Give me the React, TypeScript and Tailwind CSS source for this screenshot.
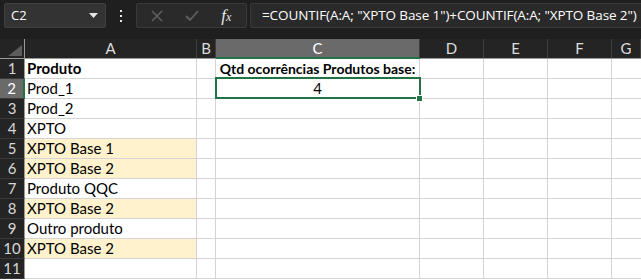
// Excel-like sheet, dark ribbon chrome with COUNTIF formula

const COLS = [
  { key: "A", w: "w-[172px]" },
  { key: "B", w: "w-[19px]" },
  { key: "C", w: "w-[204px]" },
  { key: "D", w: "w-[64px]" },
  { key: "E", w: "w-[64px]" },
  { key: "F", w: "w-[64px]" },
  { key: "G", w: "flex-1" },
];

const ROWS: { a: string; bold?: boolean; fill?: boolean }[] = [
  { a: "Produto", bold: true },
  { a: "Prod_1" },
  { a: "Prod_2" },
  { a: "XPTO" },
  { a: "XPTO Base 1", fill: true },
  { a: "XPTO Base 2", fill: true },
  { a: "Produto QQC" },
  { a: "XPTO Base 2", fill: true },
  { a: "Outro produto" },
  { a: "XPTO Base 2", fill: true },
  { a: "" },
];

const cellFont = "[font-family:Lato,'Open_Sans',sans-serif] text-[15px]";

export default function App() {
  return (
    <div className="w-[641px] h-[279px] overflow-hidden bg-[#1f1f1f] [font-family:'Open_Sans',sans-serif]">
      <FormulaBar />
      <Sheet />
    </div>
  );
}

function FormulaBar() {
  return (
    <div className="flex h-[39px] items-start gap-0 pt-[3px] pl-[4px]">
      <div className="flex h-[25px] w-[102px] items-center justify-between rounded-[2px] border border-[#404040] bg-[#333333] pl-[6px] pr-[7px]">
        <span className="text-[13px] text-white">C2</span>
        <svg width="9" height="5" viewBox="0 0 9 5">
          <path d="M0 0h9L4.5 5z" fill="#e6e6e6" />
        </svg>
      </div>
      <div className="flex h-[25px] w-[30px] flex-col items-center justify-center gap-[3px]">
        <span className="h-[2px] w-[2px] bg-[#e6e6e6]" />
        <span className="h-[2px] w-[2px] bg-[#e6e6e6]" />
        <span className="h-[2px] w-[2px] bg-[#e6e6e6]" />
      </div>
      <div className="flex h-[25px] w-[111px] items-center rounded-[2px] border border-[#3a3a3a] bg-[#2a2a2a]">
        <div className="flex w-[40px] justify-center">
          <svg width="12" height="12" viewBox="0 0 12 12">
            <path d="M1 1l10 10M11 1L1 11" stroke="#5f5f5f" strokeWidth="1.6" />
          </svg>
        </div>
        <div className="flex w-[30px] justify-center">
          <svg width="14" height="11" viewBox="0 0 14 11">
            <path d="M1 6l4 4 8-9" stroke="#5f5f5f" strokeWidth="1.8" fill="none" />
          </svg>
        </div>
        <div className="flex w-[40px] justify-center">
          <span className="italic text-[17px] leading-none text-[#e8e8e8] [font-family:'Liberation_Serif',serif]">
            f<span className="text-[12px]">x</span>
          </span>
        </div>
      </div>
      <div className="ml-[3px] flex h-[25px] flex-1 items-center rounded-l-[2px] border border-r-0 border-[#3a3a3a] bg-[#2a2a2a] pl-[11px]">
        <span className="whitespace-nowrap text-[13.5px] text-white tracking-[-0.1px]">
          =COUNTIF(A:A; "XPTO Base 1")+COUNTIF(A:A; "XPTO Base 2")
        </span>
      </div>
    </div>
  );
}

function Sheet() {
  return (
    <div className="relative">
      {/* column headers */}
      <div className="flex h-[20px] bg-[#242424] border-b border-[#9a9a9a]">
        <div className="relative w-[25px] border-r border-[#9a9a9a]">
          <svg className="absolute left-[8px] top-[6px]" width="14" height="11" viewBox="0 0 14 11">
            <path d="M14 0v11H0z" fill="#5c5c5c" />
          </svg>
        </div>
        {COLS.map((c) => (
          <div
            key={c.key}
            className={`${c.w} flex shrink-0 items-center justify-center border-r border-[#3e3e3e] text-[14px] ${
              c.key === "C" ? "bg-[#6a6a6a] text-white border-b-2 border-b-[#217346] -mb-[1px]" : "text-[#dcdcdc]"
            } ${cellFont}`}
          >
            {c.key}
          </div>
        ))}
      </div>

      {ROWS.map((r, i) => (
        <div key={i} className="flex h-[20px]">
          <div
            className={`flex w-[25px] shrink-0 items-center justify-center border-b border-[#3a3a3a] text-[14px] ${cellFont} ${
              i === 1
                ? "bg-[#6a6a6a] text-white border-r-2 border-r-[#217346]"
                : "bg-[#242424] text-[#d8d8d8] border-r border-r-[#9a9a9a]"
            }`}
          >
            {i + 1}
          </div>
          <div
            className={`w-[172px] shrink-0 border-r border-b border-[#d4d4d4] pl-[2px] leading-[19px] text-black ${cellFont} ${
              r.fill ? "bg-[#fff2cc]" : "bg-white"
            } ${r.bold ? "font-bold" : ""}`}
          >
            {r.a}
          </div>
          <div className="w-[19px] shrink-0 border-r border-b border-[#d4d4d4] bg-white" />
          <div
            className={`w-[204px] shrink-0 whitespace-nowrap border-r border-b border-[#d4d4d4] bg-white text-center leading-[19px] text-black ${cellFont} ${
              i === 0 ? "font-bold !text-[14px]" : ""
            }`}
          >
            {i === 0 ? "Qtd ocorrências Produtos base:" : i === 1 ? "4" : ""}
          </div>
          <div className="w-[64px] shrink-0 border-r border-b border-[#d4d4d4] bg-white" />
          <div className="w-[64px] shrink-0 border-r border-b border-[#d4d4d4] bg-white" />
          <div className="w-[64px] shrink-0 border-r border-b border-[#d4d4d4] bg-white" />
          <div className="flex-1 border-b border-[#d4d4d4] bg-white" />
        </div>
      ))}

      {/* active cell C2 */}
      <div className="pointer-events-none absolute left-[215px] top-[38px] h-[22px] w-[206px] border-2 border-[#217346]" />
      <div className="absolute left-[417px] top-[57px] h-[5px] w-[5px] bg-[#217346] outline outline-1 outline-white" />
    </div>
  );
}
